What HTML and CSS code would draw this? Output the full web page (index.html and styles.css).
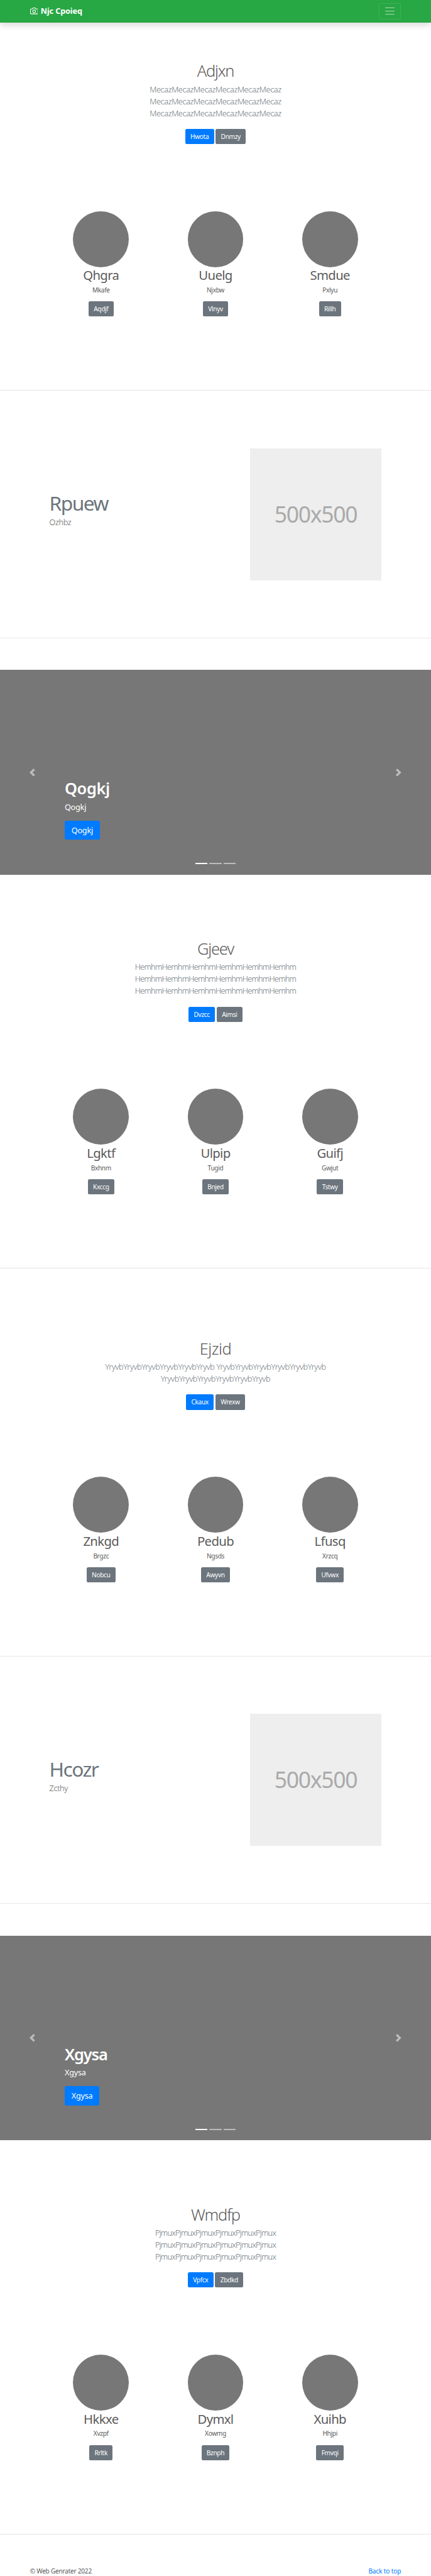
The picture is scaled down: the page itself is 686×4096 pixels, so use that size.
FILE: index.html
```html
<!DOCTYPE html>
<html lang="en">
<head>
<meta charset="utf-8">
<title>Njc Cpoieq</title>
<link rel="stylesheet" href="styles.css">
</head>
<body>
<header class="navbar">
  <a class="brand"><svg class="brand-icon" viewBox="0 0 24 24" fill="none" stroke="currentColor" stroke-width="2" stroke-linecap="round" stroke-linejoin="round"><path d="M23 19a2 2 0 0 1-2 2H3a2 2 0 0 1-2-2V8a2 2 0 0 1 2-2h4l2-3h6l2 3h4a2 2 0 0 1 2 2z"/><circle cx="12" cy="13" r="4"/></svg><strong>Njc Cpoieq</strong></a>
  <button class="toggler"><svg viewBox="0 0 30 30" fill="none" stroke="rgba(255,255,255,.5)" stroke-width="2" stroke-linecap="round"><path d="M4 7h22M4 15h22M4 23h22"/></svg></button>
</header>
<main>
  <section class="hero hero-first">
    <h1>Adjxn</h1>
    <p class="lead">MecazMecazMecazMecazMecazMecaz MecazMecazMecazMecazMecazMecaz MecazMecazMecazMecazMecazMecaz</p>
    <div class="actions"><a class="btn primary">Hwota</a><a class="btn">Dnmzy</a></div>
  </section>
  <section class="features">
    <div class="feature"><span class="avatar"></span><h2>Qhgra</h2><p>Mkafe</p><a class="btn">Aqdjf</a></div>
    <div class="feature"><span class="avatar"></span><h2>Uuelg</h2><p>Njxbw</p><a class="btn">Vlnyv</a></div>
    <div class="feature"><span class="avatar"></span><h2>Smdue</h2><p>Pxlyu</p><a class="btn">Rillh</a></div>
  </section>
  <hr>
  <section class="showcase">
    <div class="showcase-text"><h2>Rpuew</h2><p>Ozhbz</p></div>
    <div class="placeholder"><span>500x500</span></div>
  </section>
  <hr>
  <section class="carousel">
    <div class="caption"><h1>Qogkj</h1><p>Qogkj</p><a class="btn primary large">Qogkj</a></div>
    <svg class="arrow prev" viewBox="0 0 8 8" fill="#fff"><path d="M5.25 0l-4 4 4 4 1.5-1.5L4.25 4l2.5-2.5L5.25 0z"/></svg>
    <svg class="arrow next" viewBox="0 0 8 8" fill="#fff"><path d="M2.75 0l-1.5 1.5L3.75 4l-2.5 2.5L2.75 8l4-4-4-4z"/></svg>
    <div class="dots"><i class="on"></i><i></i><i></i></div>
  </section>
  <section class="hero hero-carousel">
    <h1>Gjeev</h1>
    <p class="lead tight">HemhmHemhmHemhmHemhmHemhmHemhm HemhmHemhmHemhmHemhmHemhmHemhm HemhmHemhmHemhmHemhmHemhmHemhm</p>
    <div class="actions"><a class="btn primary">Dvzcc</a><a class="btn">Aimsi</a></div>
  </section>
  <section class="features">
    <div class="feature"><span class="avatar"></span><h2>Lgktf</h2><p>Bxhnm</p><a class="btn">Kxccg</a></div>
    <div class="feature"><span class="avatar"></span><h2>Ulpip</h2><p>Tugid</p><a class="btn">Bnjed</a></div>
    <div class="feature"><span class="avatar"></span><h2>Guifj</h2><p>Gwjut</p><a class="btn">Tstwy</a></div>
  </section>
  <hr>
  <section class="hero hero-rule">
    <h1 class="loose">Ejzid</h1>
    <p class="lead">YryvbYryvbYryvbYryvbYryvbYryvb YryvbYryvbYryvbYryvbYryvbYryvb YryvbYryvbYryvbYryvbYryvbYryvb</p>
    <div class="actions"><a class="btn primary">Ckaux</a><a class="btn">Wrexw</a></div>
  </section>
  <section class="features">
    <div class="feature"><span class="avatar"></span><h2>Znkgd</h2><p>Brgzc</p><a class="btn">Nobcu</a></div>
    <div class="feature"><span class="avatar"></span><h2>Pedub</h2><p>Ngsds</p><a class="btn">Awyvn</a></div>
    <div class="feature"><span class="avatar"></span><h2>Lfusq</h2><p>Xrzcq</p><a class="btn">Ufvwx</a></div>
  </section>
  <hr>
  <section class="showcase">
    <div class="showcase-text"><h2>Hcozr</h2><p>Zcthy</p></div>
    <div class="placeholder"><span>500x500</span></div>
  </section>
  <hr>
  <section class="carousel">
    <div class="caption tight"><h1>Xgysa</h1><p>Xgysa</p><a class="btn primary large">Xgysa</a></div>
    <svg class="arrow prev" viewBox="0 0 8 8" fill="#fff"><path d="M5.25 0l-4 4 4 4 1.5-1.5L4.25 4l2.5-2.5L5.25 0z"/></svg>
    <svg class="arrow next" viewBox="0 0 8 8" fill="#fff"><path d="M2.75 0l-1.5 1.5L3.75 4l-2.5 2.5L2.75 8l4-4-4-4z"/></svg>
    <div class="dots"><i class="on"></i><i></i><i></i></div>
  </section>
  <section class="hero hero-carousel">
    <h1>Wmdfp</h1>
    <p class="lead tight">PjmuxPjmuxPjmuxPjmuxPjmuxPjmux PjmuxPjmuxPjmuxPjmuxPjmuxPjmux PjmuxPjmuxPjmuxPjmuxPjmuxPjmux</p>
    <div class="actions"><a class="btn primary">Vpfcx</a><a class="btn">Zbdkd</a></div>
  </section>
  <section class="features">
    <div class="feature"><span class="avatar"></span><h2>Hkkxe</h2><p>Xvzpf</p><a class="btn">Rrltk</a></div>
    <div class="feature"><span class="avatar"></span><h2>Dymxl</h2><p>Xowmg</p><a class="btn">Bznph</a></div>
    <div class="feature"><span class="avatar"></span><h2>Xuihb</h2><p>Hhjpi</p><a class="btn">Fmvqi</a></div>
  </section>
  <hr>
</main>
<footer class="footer"><span>© Web Genrater 2022</span><a class="top-link">Back to top</a></footer>
</body>
</html>
```
FILE: styles.css
```css
* { box-sizing: border-box; margin: 0; padding: 0; }
html { font-size: 6.356px; overflow: hidden; }
body {
  font: 400 1.6rem/2.4rem "Noto Sans", "Open Sans", sans-serif;
  color: #5a5a5a;
  background: #fff;
}

/* Navigation bar */
.navbar {
  position: relative;
  display: flex;
  justify-content: space-between;
  align-items: center;
  height: 5.6rem;
  padding: 0 7.5rem;
  background: #28a745;
  color: #fff;
  box-shadow: 0 0.8rem 1.6rem rgba(0, 0, 0, 0.15);
}
.brand { display: flex; align-items: center; gap: 0.7rem; font-size: 2rem; line-height: 3rem; letter-spacing: -0.012em; }
.brand-icon { width: 2rem; height: 2rem; }
.toggler {
  display: flex;
  align-items: center;
  justify-content: center;
  width: 5.6rem;
  height: 4rem;
  background: none;
  border: 1px solid rgba(255, 255, 255, 0.1);
  border-radius: 0.4rem;
}
.toggler svg { width: 3rem; height: 3rem; flex: none; }

/* Hero */
.hero { display: flex; flex-direction: column; align-items: center; padding-bottom: 16.8rem; text-align: center; }
.hero-first { padding-top: 9.7rem; }
.hero-carousel { padding-top: 16.1rem; }
.hero-rule { padding-top: 17.6rem; }
.hero h1 { font-size: 4rem; line-height: 4.8rem; font-weight: 300; letter-spacing: -0.046em; }
.hero .loose { letter-spacing: -0.02em; }
.lead { width: 60rem; margin: 0.75rem 0 2.37rem; font-size: 2rem; line-height: 3rem; font-weight: 300; letter-spacing: -0.03em; color: #6c757d; }
.lead.tight { letter-spacing: -0.059em; }
.actions { display: flex; gap: 0.45rem; }
.btn {
  display: inline-block;
  height: 3.8rem;
  padding: 0 1.3rem;
  border-radius: 0.4rem;
  background: #6c757d;
  color: #fff;
  font-size: 1.6rem;
  line-height: 3.8rem;
  letter-spacing: -0.036em;
}
.btn.primary { background: #007bff; }
.btn.large { height: 4.8rem; padding: 0 1.7rem; border-radius: 0.5rem; font-size: 2rem; line-height: 4.8rem; letter-spacing: -0.02em; }

/* Three columns with round pictures */
.features { display: grid; grid-template-columns: repeat(3, 1fr); width: 86rem; margin: 0 auto 18.4rem; text-align: center; }
.feature { display: flex; flex-direction: column; align-items: center; }
.avatar { width: 14rem; height: 14rem; border-radius: 50%; background: #777; }
.feature h2 { margin-top: 0.1rem; font-size: 3.2rem; line-height: 3.84rem; font-weight: 400; letter-spacing: -0.032em; }
.feature p { margin: 0.67rem 0 1.58rem; letter-spacing: -0.035em; }
hr { border: 0; height: 1px; background: #e6e6e6; }

/* Text beside a picture */
.showcase { display: flex; justify-content: space-between; width: 83.2rem; margin: 0 auto; padding: 14.4rem 0 14.35rem; }
.showcase-text { padding-top: 11.26rem; }
.showcase h2 { font-size: 5rem; line-height: 5rem; font-weight: 400; letter-spacing: -0.05em; color: #6c757d; }
.showcase p { margin-top: 0.76rem; font-size: 2rem; line-height: 3rem; font-weight: 300; letter-spacing: -0.03em; }
.placeholder { display: flex; align-items: center; justify-content: center; width: 33rem; height: 33rem; background: #eee; color: #aaa; font-size: 5.6rem; line-height: 1; letter-spacing: -0.038em; }

/* Carousel */
.carousel { position: relative; height: 51.2rem; margin-top: 7.95rem; padding: 27.25rem 0 0 16.2rem; background: #777; color: #fff; }
.caption h1 { font-size: 4rem; line-height: 4.8rem; font-weight: 600; letter-spacing: -0.014em; }
.caption.tight h1 { letter-spacing: -0.045em; }
.caption p { margin: 0.76rem 0 1.84rem; font-size: 2rem; line-height: 3rem; letter-spacing: -0.02em; }
.caption .btn { display: block; width: fit-content; }
.arrow { position: absolute; top: 24.6rem; width: 2rem; height: 2rem; opacity: 0.5; }
.prev { left: 7.1rem; }
.next { right: 7.1rem; }
.dots { position: absolute; left: 0; right: 0; bottom: 2.6rem; display: flex; justify-content: center; gap: 0.6rem; }
.dots i { width: 3rem; height: 2px; background: #fff; opacity: 0.5; }
.dots .on { opacity: 1; }

.footer { display: flex; justify-content: space-between; padding: 8.05rem 7.5rem 0; letter-spacing: -0.027em; }
.top-link { color: #007bff; letter-spacing: -0.016em; }
```
